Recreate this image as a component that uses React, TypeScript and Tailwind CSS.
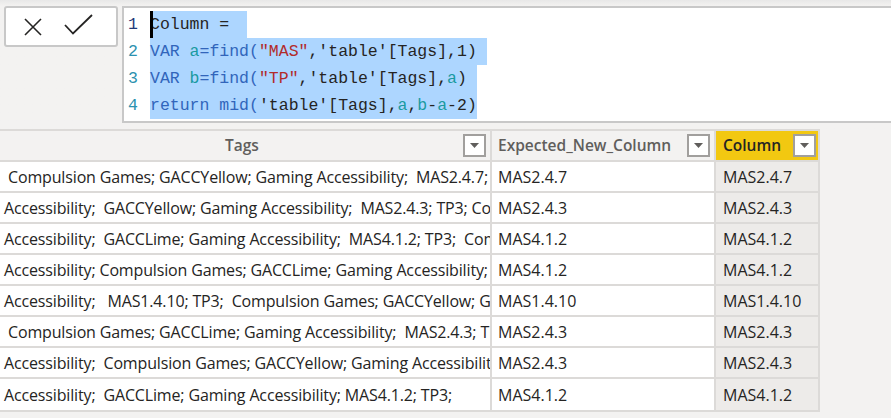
import React from 'react';

const rows = [
  { tags: ' Compulsion Games; GACCYellow; Gaming Accessibility;  MAS2.4.7; TP3;', expected: 'MAS2.4.7', column: 'MAS2.4.7' },
  { tags: 'Accessibility;  GACCYellow; Gaming Accessibility;  MAS2.4.3; TP3; Compulsion', expected: 'MAS2.4.3', column: 'MAS2.4.3' },
  { tags: 'Accessibility;  GACCLime; Gaming Accessibility;  MAS4.1.2; TP3;  Compulsion', expected: 'MAS4.1.2', column: 'MAS4.1.2' },
  { tags: 'Accessibility; Compulsion Games; GACCLime; Gaming Accessibility; MAS4.1.2', expected: 'MAS4.1.2', column: 'MAS4.1.2' },
  { tags: 'Accessibility;   MAS1.4.10; TP3;  Compulsion Games; GACCYellow; Gaming', expected: 'MAS1.4.10', column: 'MAS1.4.10' },
  { tags: ' Compulsion Games; GACCLime; Gaming Accessibility;  MAS2.4.3; TP3;', expected: 'MAS2.4.3', column: 'MAS2.4.3' },
  { tags: 'Accessibility;  Compulsion Games; GACCYellow; Gaming Accessibility;', expected: 'MAS2.4.3', column: 'MAS2.4.3' },
  { tags: 'Accessibility;  GACCLime; Gaming Accessibility; MAS4.1.2; TP3;', expected: 'MAS4.1.2', column: 'MAS4.1.2' },
];

const FilterButton = () => (
  <div className="w-[23px] h-[23px] border-2 border-[#a19f9d] bg-white flex items-center justify-center shrink-0">
    <svg width="9" height="5" viewBox="0 0 9 5">
      <path d="M0 0 L9 0 L4.5 5 Z" fill="#605e5c" />
    </svg>
  </div>
);

const K = ({ children }: { children: React.ReactNode }) => <span className="text-[#3165bb]">{children}</span>;
const V = ({ children }: { children: React.ReactNode }) => <span className="text-[#1a9aa0]">{children}</span>;
const S = ({ children }: { children: React.ReactNode }) => <span className="text-[#b22b2b]">{children}</span>;

export default function App() {
  return (
    <div className="w-[891px] h-[418px] overflow-hidden bg-[#f3f2f1] font-['Open_Sans',sans-serif] text-[#252423]">
      {/* formula bar */}
      <div className="flex items-start pt-[6px] pl-[4px] h-[129px] bg-gradient-to-b from-[#e8e8e8] to-[#f3f2f1] to-[6px]">
        <div className="shrink-0 w-[114px] h-[41px] bg-white border-2 border-[#c8c8c8] rounded-[3px] flex items-center">
          <svg width="18" height="18" viewBox="0 0 18 18" className="ml-[18px]">
            <path d="M1 1 L17 17 M17 1 L1 17" stroke="#252423" strokeWidth="1.6" />
          </svg>
          <svg width="29" height="21" viewBox="0 0 29 21" className="ml-[22px] -mt-[4px]">
            <path d="M1 11 L9 19.5 L28 1" stroke="#252423" strokeWidth="1.8" fill="none" />
          </svg>
        </div>
        <div className="shrink-0 ml-[4px] w-[800px] h-[117px] bg-white border-2 border-[#c8c8c8] flex pt-[2px] font-['Liberation_Mono',monospace] text-[16.5px] leading-[27px]">
          <div className="w-[26px] pl-[4px] pt-[1px] text-[#2b91af]">
            <div className="text-[#1f3a7a]">1</div>
            <div>2</div>
            <div>3</div>
            <div>4</div>
          </div>
          <div className="relative pt-[1px]">
            <div className="absolute left-0 top-[1px] h-[27px] w-[3px] bg-black" />
            <div className="flex"><span className="bg-[#add6ff] whitespace-pre pr-[8px]">Column = </span></div>
            <div className="flex"><span className="bg-[#add6ff] whitespace-pre pr-[10px]"><K>VAR </K><V>a</V><K>=find(</K><S>"MAS"</S>,'table'[Tags],1)</span></div>
            <div className="flex"><span className="bg-[#add6ff] whitespace-pre pr-[10px]"><K>VAR </K><V>b</V><K>=find(</K><S>"TP"</S>,'table'[Tags],<V>a</V>)</span></div>
            <div className="flex"><span className="bg-[#add6ff] whitespace-pre"><K>return mid(</K>'table'[Tags],<V>a</V>,<V>b</V>-<V>a</V>-2)</span></div>
          </div>
        </div>
      </div>

      {/* table */}
      <div className="w-[820px] border-t-2 border-b-2 border-r-2 border-[#dcdad8]">
        <div className="flex h-[31px] border-b-2 border-[#dcdad8]">
          <div className="w-[492px] flex items-center justify-end pr-[4px] border-r-2 border-[#dcdad8] relative">
            <span className="absolute left-[225px] font-semibold text-[#605e5c] text-[15.5px]">Tags</span>
            <FilterButton />
          </div>
          <div className="w-[224px] flex items-center justify-between pl-[6px] pr-[4px] border-r-2 border-[#dcdad8]">
            <span className="font-semibold text-[#605e5c] text-[15.5px]">Expected_New_Column</span>
            <FilterButton />
          </div>
          <div className="flex-1 flex items-center justify-between pl-[7px] pr-[2px] bg-[#f2c811]">
            <span className="font-semibold text-[#252423] text-[15.5px]">Column</span>
            <FilterButton />
          </div>
        </div>
        {rows.map((r, i) => (
          <div key={i} className={`flex h-[31px] text-[16px] ${i < rows.length - 1 ? 'border-b-2 border-[#dcdad8]' : ''}`}>
            <div className="w-[492px] bg-white border-r-2 border-[#dcdad8] pl-[4px] flex items-center overflow-hidden whitespace-pre tracking-[-0.15px]">
              {r.tags}
            </div>
            <div className="w-[224px] bg-white border-r-2 border-[#dcdad8] pl-[6px] flex items-center">{r.expected}</div>
            <div className="flex-1 bg-[#edebe9] pl-[7px] flex items-center">{r.column}</div>
          </div>
        ))}
      </div>
    </div>
  );
}
